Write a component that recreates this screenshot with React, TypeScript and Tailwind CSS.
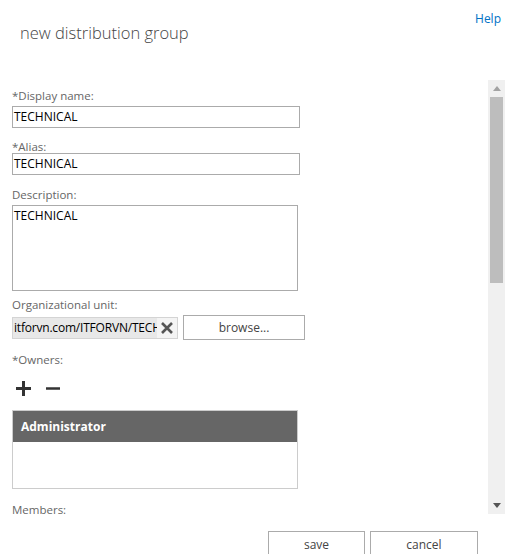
import React from "react";

export default function App() {
  const label = "shrink-0 text-[11.5px] leading-[16px] text-[#666666]";
  const input =
    "shrink-0 h-[22px] border border-[#ababab] bg-white px-[1px] text-[12px] leading-[20px] text-black";
  return (
    <div className="w-[508px] h-[554px] bg-white overflow-hidden flex flex-col font-['Open_Sans',sans-serif]">
      <div className="h-[80px] flex justify-between shrink-0">
        <div className="pl-[20px] pt-[21px] text-[16.5px] leading-[24px] font-light text-[#444444]">
          new distribution group
        </div>
        <div className="pr-[7px] pt-[11px] text-[12px] leading-[16px] text-[#0072c6]">Help</div>
      </div>
      <div className="h-[434px] flex shrink-0">
        <div className="flex-1 pl-[12px] flex flex-col overflow-hidden">
          <div className={`${label} mt-[8px]`}>*Display name:</div>
          <div className={`${input} w-[288px] mt-[2px]`}>TECHNICAL</div>
          <div className={`${label} mt-[11px]`}>*Alias:</div>
          <div className={`${input} w-[288px] mt-[-2px]`}>TECHNICAL</div>
          <div className={`${label} mt-[12px]`}>Description:</div>
          <div className="shrink-0 h-[86px] w-[286px] mt-[2px] border border-[#ababab] bg-white px-[1px] text-[12px] leading-[20px] text-black">
            TECHNICAL
          </div>
          <div className={`${label} mt-[6px]`}>Organizational unit:</div>
          <div className="shrink-0 flex items-center gap-[5px] mt-[2px]">
            <div className="h-[22px] w-[166px] border border-[#d4d4d4] bg-[#e8e8e8] flex items-center">
              <div className="flex-1 overflow-hidden whitespace-nowrap text-[12px] leading-[20px] text-black pl-[1px] tracking-[-0.2px]">
                itforvn.com/ITFORVN/TECHNICAL
              </div>
              <div className="w-[20px] h-[20px] bg-[#f4f4f4] flex items-center justify-center">
                <svg width="14" height="14" viewBox="0 0 14 14">
                  <path d="M2 2 L12 12 M12 2 L2 12" stroke="#555555" strokeWidth="2.6" />
                </svg>
              </div>
            </div>
            <div className="h-[25px] w-[122px] border border-[#ababab] bg-white flex items-center justify-center text-[12px] text-[#444444]">
              browse...
            </div>
          </div>
          <div className={`${label} mt-[12px]`}>*Owners:</div>
          <div className="shrink-0 flex items-center gap-[15px] mt-[12px] pl-[4px] h-[16px]">
            <svg width="15" height="15" viewBox="0 0 15 15">
              <path d="M7.5 0 V15 M0 7.5 H15" stroke="#333333" strokeWidth="3" />
            </svg>
            <svg width="14" height="15" viewBox="0 0 14 15">
              <path d="M0 7.5 H14" stroke="#333333" strokeWidth="2.5" />
            </svg>
          </div>
          <div className="shrink-0 w-[286px] h-[79px] mt-[14px] border border-[#cccccc] bg-white">
            <div className="h-[31px] bg-[#666666] pl-[8px] flex items-center text-[12px] font-bold text-white">
              Administrator
            </div>
          </div>
          <div className={`${label} mt-[13px]`}>Members:</div>
        </div>
        <div className="w-[17px] mr-[3px] bg-[#f0f0f0] flex flex-col items-center">
          <div className="h-[17px] flex items-center justify-center">
            <svg width="8" height="5" viewBox="0 0 8 5">
              <path d="M0 5 L4 0 L8 5 Z" fill="#a3a3a3" />
            </svg>
          </div>
          <div className="w-[13px] h-[186px] bg-[#bdbdbd]" />
          <div className="flex-1" />
          <div className="h-[17px] flex items-center justify-center">
            <svg width="8" height="5" viewBox="0 0 8 5">
              <path d="M0 0 L8 0 L4 5 Z" fill="#555555" />
            </svg>
          </div>
        </div>
      </div>
      <div className="flex justify-end gap-[5px] pr-[30px] pt-[17px]">
        <div className="w-[97px] h-[30px] border border-[#ababab] bg-white flex justify-center pt-[4px] text-[12px] text-[#444444]">
          save
        </div>
        <div className="w-[108px] h-[30px] border border-[#ababab] bg-white flex justify-center pt-[4px] text-[12px] text-[#444444]">
          cancel
        </div>
      </div>
    </div>
  );
}
